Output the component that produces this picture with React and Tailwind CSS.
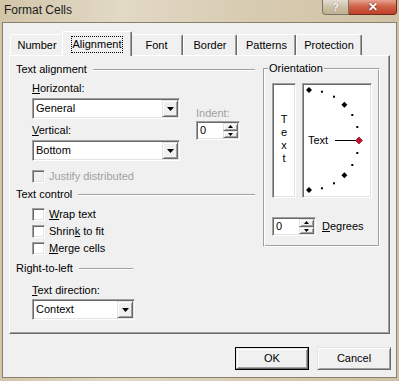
import React from "react";

const sunken =
  "border border-t-[#a0a0a0] border-l-[#a0a0a0] border-r-white border-b-white shadow-[inset_1px_1px_0_#696969,inset_-1px_-1px_0_#e3e3e3]";
const raised =
  "border border-t-[#e3e3e3] border-l-[#e3e3e3] border-r-[#696969] border-b-[#696969] shadow-[inset_1px_1px_0_#ffffff,inset_-1px_-1px_0_#a0a0a0]";

const DownArrow = () => (
  <svg width="7" height="4" viewBox="0 0 7 4">
    <polygon points="0,0 7,0 3.5,4" fill="#000" />
  </svg>
);

const Combo = ({ value, width }) => (
  <div className={`flex h-[21px] bg-white ${sunken} ${width}`}>
    <span className="flex-1 pl-[3px] leading-[19px]">{value}</span>
    <div className={`m-[1px] w-[16px] flex items-center justify-center bg-[#f0f0f0] ${raised}`}>
      <DownArrow />
    </div>
  </div>
);

const SpinBtn = ({ up }) => (
  <div className={`flex-1 flex items-center justify-center bg-[#f0f0f0] ${raised}`}>
    <svg width="5" height="3" viewBox="0 0 5 3">
      <polygon points={up ? "0,3 5,3 2.5,0" : "0,0 5,0 2.5,3"} fill="#000" />
    </svg>
  </div>
);

const Spin = ({ width }) => (
  <div className={`flex h-[19px] bg-white ${sunken} ${width}`}>
    <span className="flex-1 pl-[3px] leading-[17px]">0</span>
    <div className="flex flex-col w-[15px] m-[1px]">
      <SpinBtn up />
      <SpinBtn />
    </div>
  </div>
);

const Check = ({ children, disabled }) => (
  <div className="flex items-center h-[13px]">
    <div className={`w-[13px] h-[13px] ${sunken} ${disabled ? "bg-[#f0f0f0]" : "bg-white"}`} />
    <span className={`ml-[4px] leading-[13px] ${disabled ? "text-[#a0a0a0]" : ""}`}>{children}</span>
  </div>
);

const GroupHeader = ({ children, width }) => (
  <div className={`flex items-center h-[13px] ${width}`}>
    <span className="leading-[13px]">{children}</span>
    <div className="ml-[6px] flex-1 h-[2px] border-t border-b border-t-[#a0a0a0] border-b-white" />
  </div>
);

const U = ({ children }) => <span className="underline underline-offset-[1px]">{children}</span>;

const Tab = ({ label, width, active }) =>
  active ? (
    <div
      className={`relative z-10 -mx-[2px] -mb-[1px] h-[25px] flex items-center justify-center bg-[#f0f0f0] border-l border-t border-r border-l-white border-t-white border-r-[#696969] rounded-t-[2px] shadow-[inset_-1px_0_0_#a0a0a0] ${width}`}
    >
      <span className="px-[1px] leading-[15px] border border-dotted border-black">{label}</span>
    </div>
  ) : (
    <div
      className={`h-[21px] flex items-center justify-center bg-[#f0f0f0] border-l border-t border-r border-l-white border-t-white border-r-[#696969] rounded-t-[2px] shadow-[inset_-1px_0_0_#a0a0a0] ${width}`}
    >
      <span className="leading-[13px]">{label}</span>
    </div>
  );

const Dial = () => {
  const cx = 5;
  const cy = 55;
  const r = 50;
  const points = [];
  for (let a = 90; a >= -90; a -= 15) {
    const rad = (a * Math.PI) / 180;
    points.push({ a, x: cx + r * Math.cos(rad), y: cy - r * Math.sin(rad) });
  }
  return (
    <svg width="66" height="111" viewBox="0 0 66 111">
      {points.map((p) => {
        if (p.a === 0) return null;
        if (p.a % 45 === 0) {
          return (
            <polygon
              key={p.a}
              points={`${p.x},${p.y - 3} ${p.x + 3},${p.y} ${p.x},${p.y + 3} ${p.x - 3},${p.y}`}
              fill="#000"
            />
          );
        }
        return <rect key={p.a} x={p.x - 1} y={p.y - 1} width="2" height="2" fill="#000" />;
      })}
      <text x="4" y="59" fontSize="11" fontFamily="Liberation Sans, Arial, sans-serif" fill="#000">
        Text
      </text>
      <line x1="31" y1="55.5" x2="52" y2="55.5" stroke="#000" strokeWidth="1" />
      <polygon points="55,52 58.5,55.5 55,59 51.5,55.5" fill="#c8102e" stroke="#6b0000" strokeWidth="0.6" />
    </svg>
  );
};

export default function App() {
  return (
    <div className="w-[399px] h-[381px] overflow-hidden bg-[linear-gradient(90deg,#d2c5a8,#e2d9c6_30%,#d8ccb3_60%,#cfc2a4)] font-['Liberation_Sans',Arial,sans-serif] text-[11px] text-black">
      {/* title bar */}
      <div className="h-[22px] flex items-start">
        <span className="ml-[4px] mt-[3px] text-[12px] leading-[15px] text-[#1a1a1a]">Format Cells</span>
        <div className="ml-auto mr-[2px] flex">
          <div className="w-[27px] h-[15px] flex items-center justify-center rounded-bl-[4px] border border-t-0 border-[#7d7361] bg-[linear-gradient(#e4ddd0,#cbbfa6_50%,#bfb192)] text-[11px] font-bold text-white [text-shadow:0_0_1px_#5a5246]">
            ?
          </div>
          <div className="w-[48px] h-[15px] flex items-center justify-center rounded-br-[4px] border border-t-0 border-l-0 border-[#6e2a1c] bg-[linear-gradient(#e6a592,#d0624a_45%,#c0402a)] text-[12px] font-bold text-white [text-shadow:0_0_2px_#5a1a0c]">
            ✕
          </div>
        </div>
      </div>

      {/* client area */}
      <div className="mx-[2px] h-[356px] bg-[#f0f0f0] border border-[#8a806c] flex flex-col">
        {/* tabs */}
        <div className="mt-[9px] ml-[7px] h-[23px] flex items-end">
          <Tab label="Number" width="w-[54px]" />
          <Tab label="Alignment" width="w-[70px]" active />
          <Tab label="Font" width="w-[53px]" />
          <Tab label="Border" width="w-[54px]" />
          <Tab label="Patterns" width="w-[59px]" />
          <Tab label="Protection" width="w-[66px]" />
        </div>

        {/* tab panel */}
        <div className="ml-[6px] w-[381px] h-[279px] border border-t-white border-l-white border-r-[#696969] border-b-[#696969] shadow-[inset_-1px_-1px_0_#a0a0a0] flex gap-[8px] pl-[6px] pt-[7px]">
          {/* left column */}
          <div className="w-[239px] flex flex-col">
            <GroupHeader width="w-[239px]">Text alignment</GroupHeader>
            <div className="mt-[6px] pl-[16px] flex">
              <div className="flex flex-col">
                <span className="leading-[13px]">
                  <U>H</U>orizontal:
                </span>
                <div className="mt-[3px]">
                  <Combo value="General" width="w-[148px]" />
                </div>
                <span className="mt-[5px] leading-[13px]">
                  <U>V</U>ertical:
                </span>
                <div className="mt-[3px]">
                  <Combo value="Bottom" width="w-[148px]" />
                </div>
              </div>
              <div className="ml-[16px] mt-[25px] flex flex-col">
                <span className="leading-[13px] text-[#a0a0a0]">Indent:</span>
                <div className="mt-[1px]">
                  <Spin width="w-[44px]" />
                </div>
              </div>
            </div>
            <div className="mt-[9px] pl-[16px]">
              <Check disabled>Justify distributed</Check>
            </div>
            <div className="mt-[5px]">
              <GroupHeader width="w-[239px]">Text control</GroupHeader>
            </div>
            <div className="mt-[7px] pl-[16px] flex flex-col gap-[4px]">
              <Check>
                <U>W</U>rap text
              </Check>
              <Check>
                Shrin<U>k</U> to fit
              </Check>
              <Check>
                <U>M</U>erge cells
              </Check>
            </div>
            <div className="mt-[7px]">
              <GroupHeader width="w-[117px]">Right-to-left</GroupHeader>
            </div>
            <span className="mt-[9px] pl-[16px] leading-[13px]">
              <U>T</U>ext direction:
            </span>
            <div className="mt-[2px] pl-[16px]">
              <Combo value="Context" width="w-[103px]" />
            </div>
          </div>

          {/* orientation */}
          <div className="relative mt-[5px] w-[117px] h-[179px] border border-t-[#a0a0a0] border-l-[#a0a0a0] border-r-white border-b-white shadow-[inset_1px_1px_0_#ffffff,inset_-1px_-1px_0_#a0a0a0]">
            <span className="absolute -top-[7px] left-[4px] px-[1px] bg-[#f0f0f0] leading-[13px]">Orientation</span>
            <div className="flex gap-[6px] pl-[8px] pt-[14px]">
              <div className={`w-[24px] h-[115px] bg-white flex flex-col items-center pt-[29px] ${sunken}`}>
                <span className="leading-[13px]">T</span>
                <span className="leading-[13px]">e</span>
                <span className="leading-[13px]">x</span>
                <span className="leading-[13px]">t</span>
              </div>
              <div className={`w-[70px] h-[115px] bg-white p-px ${sunken}`}>
                <Dial />
              </div>
            </div>
            <div className="mt-[19px] pl-[8px] flex items-center">
              <Spin width="w-[44px]" />
              <span className="ml-[6px] leading-[13px]">
                <U>D</U>egrees
              </span>
            </div>
          </div>
        </div>

        {/* buttons */}
        <div className="mt-[13px] pr-[5px] flex justify-end gap-[8px]">
          <div className="w-[74px] h-[23px] border border-black">
            <div className={`w-full h-full flex items-center justify-center bg-[#f0f0f0] ${raised}`}>OK</div>
          </div>
          <div className={`w-[74px] h-[23px] flex items-center justify-center bg-[#f0f0f0] ${raised}`}>Cancel</div>
        </div>
      </div>
    </div>
  );
}
